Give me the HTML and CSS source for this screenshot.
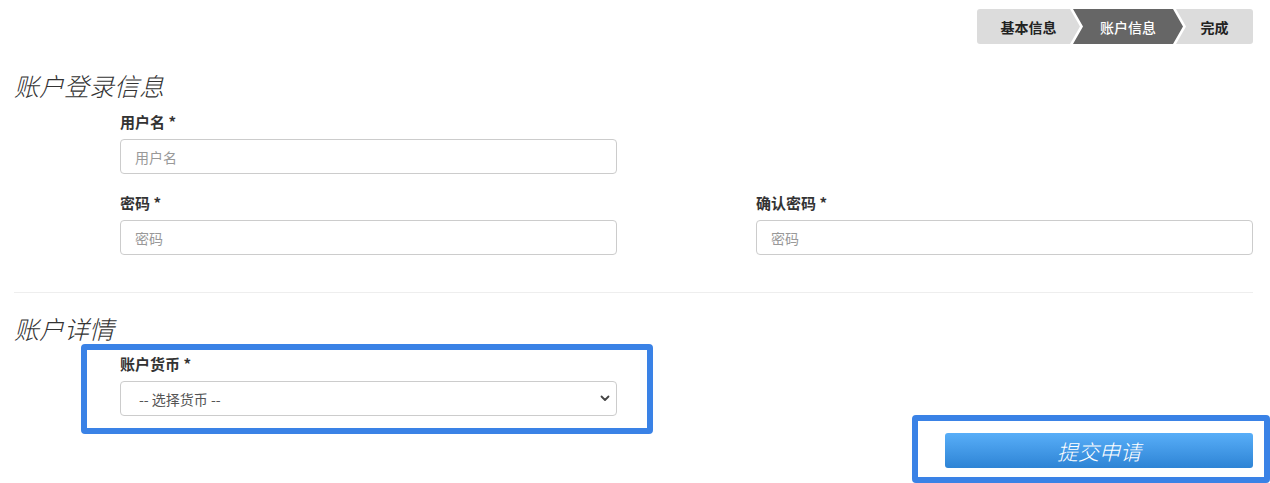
FILE: index.html
```html
<!DOCTYPE html>
<html lang="zh-CN">
<head>
    <meta charset="UTF-8">
    <meta name="viewport" content="width=device-width, initial-scale=1.0">
    <title>开户申请</title>
    <link rel="stylesheet" href="styles.css">
</head>
<body>
    <main class="page">
        <div class="steps">
            <div class="step step-first">基本信息</div>
            <div class="step step-active">账户信息</div>
            <div class="step step-last">完成</div>
        </div>

        <h2 class="section-title">账户登录信息</h2>
        <div class="form-grid">
            <div class="field">
                <label for="username">用户名 *</label>
                <input type="text" id="username" placeholder="用户名">
            </div>
            <div></div>
            <div class="field">
                <label for="password">密码 *</label>
                <input type="password" id="password" placeholder="密码">
            </div>
            <div class="field">
                <label for="confirm">确认密码 *</label>
                <input type="password" id="confirm" placeholder="密码">
            </div>
        </div>

        <hr class="divider">

        <h2 class="section-title title-details">账户详情</h2>
        <div class="form-grid">
            <div class="field marked">
                <label for="currency">账户货币 *</label>
                <div class="select-wrap">
                    <select id="currency">
                        <option>-- 选择货币 --</option>
                        <option>CNY</option>
                        <option>USD</option>
                    </select>
                    <svg class="chevron" width="10" height="7" viewBox="0 0 10 7">
                        <path d="M1.5 1.5 L5 5 L8.5 1.5" fill="none" stroke="#444" stroke-width="1.8" stroke-linecap="round" stroke-linejoin="round"/>
                    </svg>
                </div>
                <span class="highlight highlight-field"></span>
            </div>
        </div>

        <div class="actions">
            <div class="marked">
                <button type="submit" class="submit-btn">提交申请</button>
                <span class="highlight highlight-btn"></span>
            </div>
        </div>
    </main>
</body>
</html>
```

FILE: styles.css
```css
body {
    margin: 0;
    padding: 9px 17px 15px 14px;
    background: #fff;
    font-family: "Helvetica Neue", "Noto Sans CJK SC", "Liberation Sans", sans-serif;
    color: #333;
}

.page {
    display: flex;
    flex-direction: column;
}

/* progress steps */
.steps {
    display: flex;
    justify-content: flex-end;
    height: 35px;
    margin-bottom: 24px;
}

.step {
    display: flex;
    align-items: center;
    justify-content: center;
    height: 35px;
    font-size: 14px;
    font-weight: 700;
    color: #222;
    background: #dcdcdc;
}

.step + .step {
    margin-left: -7px;
}

.step-first {
    width: 103px;
    border-radius: 3px 0 0 3px;
    clip-path: polygon(0 0, calc(100% - 10px) 0, 100% 50%, calc(100% - 10px) 100%, 0 100%);
}

.step-active {
    width: 110px;
    background: #666;
    color: #fff;
    font-weight: 500;
    clip-path: polygon(0 0, calc(100% - 10px) 0, 100% 50%, calc(100% - 10px) 100%, 0 100%, 10px 50%);
}

.step-last {
    width: 77px;
    border-radius: 0 3px 3px 0;
    clip-path: polygon(0 0, 100% 0, 100% 100%, 0 100%, 10px 50%);
}

.section-title {
    margin: 0 0 10px;
    font-size: 25px;
    line-height: 34px;
    font-weight: 300;
    font-style: italic;
    color: #333;
}

.title-details {
    margin-bottom: 9px;
}

.form-grid {
    display: grid;
    grid-template-columns: 497px 497px;
    column-gap: 139px;
    row-gap: 19px;
    padding-left: 106px;
}

.field {
    display: flex;
    flex-direction: column;
}

label {
    font-size: 15px;
    line-height: 20px;
    font-weight: 700;
    color: #333;
    margin-bottom: 7px;
}

input[type="text"],
input[type="password"],
select {
    box-sizing: border-box;
    width: 100%;
    height: 35px;
    padding: 0 14px;
    border: 1px solid #ccc;
    border-radius: 4px;
    font-family: inherit;
    font-size: 14px;
    color: #555;
    background: #fff;
}

input::placeholder {
    color: #999;
}

.select-wrap {
    position: relative;
}

select {
    appearance: none;
    -webkit-appearance: none;
    padding-left: 18px;
    color: #555;
}

.chevron {
    position: absolute;
    right: 7px;
    top: 14px;
    pointer-events: none;
}

.divider {
    width: 100%;
    border: 0;
    border-top: 1px solid #eee;
    margin: 37px 0 18px;
}

.actions {
    display: flex;
    justify-content: flex-end;
    margin-top: 17px;
}

.submit-btn {
    display: block;
    width: 308px;
    height: 35px;
    border: 0;
    border-radius: 3px;
    background: linear-gradient(#58aef8, #2e84d5);
    color: #fff;
    font-family: inherit;
    font-size: 21px;
    font-weight: 300;
    font-style: italic;
    cursor: pointer;
}

/* annotation frames drawn over the form */
.marked {
    position: relative;
}

.highlight {
    position: absolute;
    border: 6px solid #3a82e6;
    border-radius: 4px;
    pointer-events: none;
}

.highlight-field {
    top: -10px;
    right: -36px;
    bottom: -18px;
    left: -39px;
}

.highlight-btn {
    top: -18px;
    right: -17px;
    bottom: -15px;
    left: -33px;
}
```
